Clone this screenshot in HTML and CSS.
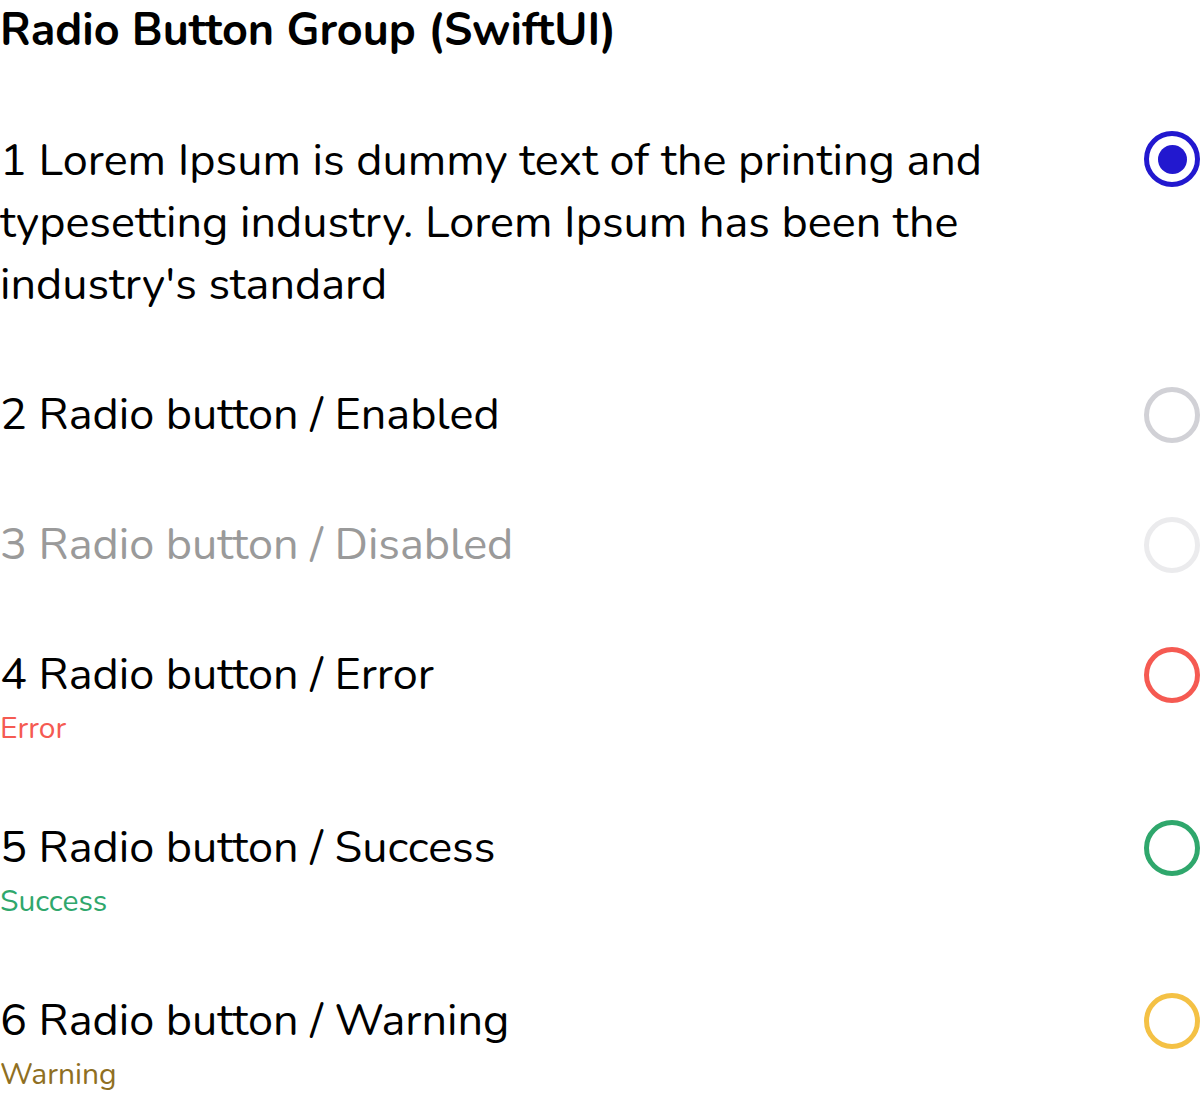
FILE: index.html
```html
<!DOCTYPE html>
<html>
<head>
<meta charset="utf-8">
<link rel="stylesheet" href="styles.css">
</head>
<body>
<div class="page">
  <h1 class="title">Radio Button Group (SwiftUI)</h1>
  <div class="group">
    <div class="row">
      <div class="label">
        <div class="text">1 Lorem Ipsum is dummy text of the printing and typesetting industry. Lorem Ipsum has been the industry's standard</div>
      </div>
      <span class="radio selected"></span>
    </div>
    <div class="row">
      <div class="label"><div class="text">2 Radio button / Enabled</div></div>
      <span class="radio enabled"></span>
    </div>
    <div class="row">
      <div class="label"><div class="text disabled">3 Radio button / Disabled</div></div>
      <span class="radio disabled"></span>
    </div>
    <div class="row">
      <div class="label">
        <div class="text">4 Radio button / Error</div>
        <div class="helper error">Error</div>
      </div>
      <span class="radio error"></span>
    </div>
    <div class="row">
      <div class="label">
        <div class="text">5 Radio button / Success</div>
        <div class="helper success">Success</div>
      </div>
      <span class="radio success"></span>
    </div>
    <div class="row">
      <div class="label">
        <div class="text">6 Radio button / Warning</div>
        <div class="helper warning">Warning</div>
      </div>
      <span class="radio warning"></span>
    </div>
  </div>
</div>
</body>
</html>
```

FILE: styles.css
```css
html, body {
  margin: 0;
  padding: 0;
  background: #ffffff;
}
body {
  font-family: "Nunito", "Noto Sans", "Open Sans", sans-serif;
  color: #000000;
}
.page {
  width: 1200px;
}
.title {
  margin: 0;
  padding-top: 6px;
  font-size: 45px;
  line-height: 49px;
  font-weight: 700;
}
.group {
  display: flex;
  flex-direction: column;
  gap: 68px;
  padding-top: 75px;
}
.row {
  display: flex;
  align-items: flex-start;
  justify-content: space-between;
}
.label {
  width: 1000px;
}
.text {
  font-size: 45px;
  line-height: 62px;
}
.text.disabled {
  color: #9a9a9a;
}
.helper {
  font-size: 30px;
  line-height: 41px;
  margin-top: 2px;
}
.helper.error { color: #f55a52; }
.helper.success { color: #2fa76c; }
.helper.warning { color: #8f6f22; }
.radio {
  box-sizing: border-box;
  width: 56px;
  height: 56px;
  border-radius: 50%;
  border: 5px solid #d1d1d6;
  margin-top: 3px;
  flex: none;
  display: flex;
  align-items: center;
  justify-content: center;
}
.radio.selected {
  border-color: #2218cf;
  margin-top: 1px;
}
.radio.selected::after {
  content: "";
  width: 29px;
  height: 29px;
  border-radius: 50%;
  background: #2218cf;
}
.radio.enabled { border-color: #d1d1d6; }
.radio.disabled { border-color: #ebebed; }
.radio.error { border-color: #f55a52; }
.radio.success { border-color: #2fa76c; }
.radio.warning { border-color: #f4c145; }
```
